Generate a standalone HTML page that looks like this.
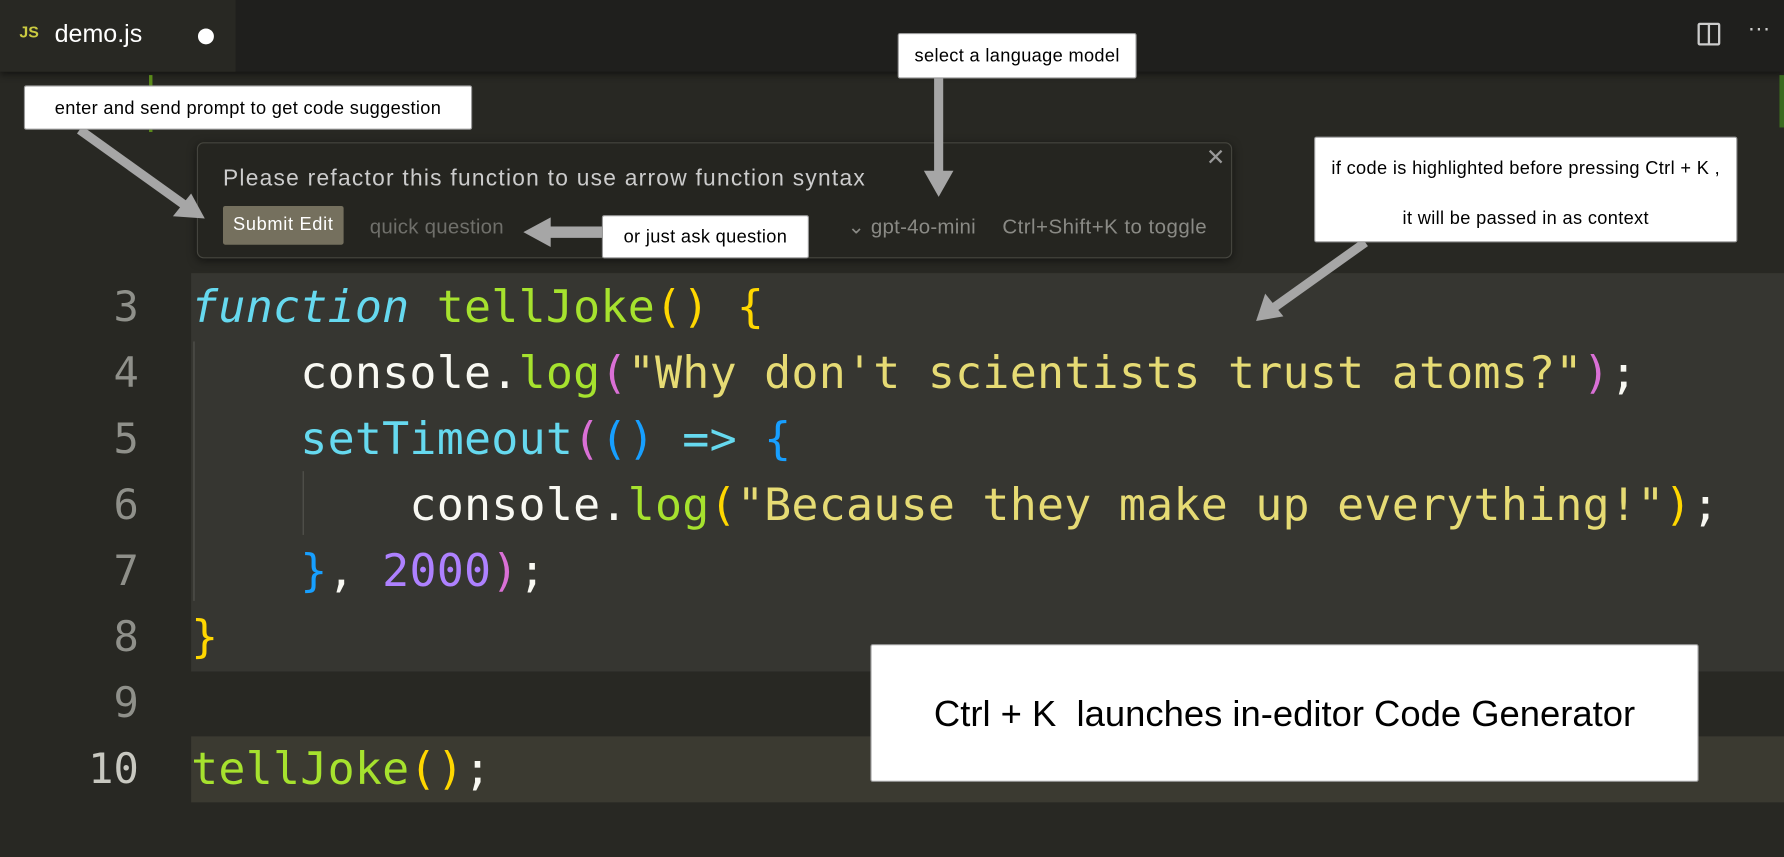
<!DOCTYPE html>
<html><head><meta charset="utf-8"><style>
html,body{margin:0;padding:0;background:#272722;overflow:hidden;width:1784px;height:857px}
#w{position:absolute;left:0;top:0;width:1568px;height:753px;transform:scale(1.13776,1.13811);transform-origin:0 0;background:#282823;font-family:"Liberation Sans",sans-serif}
.abs{position:absolute}
.tabbar{left:0;top:0;width:1568px;height:63px;background:#1f1f1d;box-shadow:0 3px 6px rgba(0,0,0,.5)}
.tab{left:0;top:0;width:207px;height:63px;background:#282823}
.code{font-family:"DejaVu Sans Mono","Liberation Mono",monospace;font-size:39.5px;letter-spacing:0.2px;white-space:pre;line-height:58px;color:#f8f8f2}
.ln{font-family:"DejaVu Sans Mono",monospace;font-size:37px;color:#8f908a;width:122px;text-align:right;left:0}
.box{background:#fff;border:1px solid #9a9a9a;border-radius:2px;color:#000;font-size:16px;letter-spacing:0.3px;text-align:center;box-sizing:border-box;white-space:nowrap}
.k{color:#66d9ef;font-style:italic}.g{color:#a6e22e}.y{color:#ffd700}.m{color:#da70d6}.s{color:#e6db74}.b{color:#179fff}.c{color:#66d9ef}.p{color:#ae81ff}
</style></head><body><div id="w">
<div class="abs tabbar"></div>
<div class="abs tab"></div>
<div class="abs" style="left:17px;top:20px;color:#cbcb41;font-weight:bold;font-size:14px">JS</div>
<div class="abs" style="left:48px;top:17px;color:#fff;font-size:22px">demo.js</div>
<div class="abs" style="left:174px;top:25px;width:14px;height:14px;border-radius:50%;background:#fff"></div>
<div class="abs" style="left:1492px;top:20px;width:20px;height:20px;border:2px solid #ccc;border-radius:2px;box-sizing:border-box"></div>
<div class="abs" style="left:1501px;top:21px;width:2px;height:18px;background:#ccc"></div>
<div class="abs" style="left:1536px;top:14px;color:#ccc;font-size:20px">···</div>
<div class="abs" style="left:1564px;top:66px;width:4px;height:46px;background:#3a6b20"></div>
<div class="abs" style="left:131px;top:66px;width:3px;height:50px;background:#5a8a1a"></div>
<div class="abs" style="left:168px;top:240px;width:1400px;height:350px;background:#363631"></div>
<div class="abs" style="left:168px;top:647px;width:1400px;height:58px;background:#3b3a31"></div>
<div class="abs" style="left:170px;top:300px;width:1px;height:228px;background:#55554f"></div>
<div class="abs" style="left:266px;top:414px;width:1px;height:56px;background:#55554f"></div>
<div class="abs ln" style="top:241px;line-height:58px">3<br>4<br>5<br>6<br>7<br>8<br>9<br><span style="color:#c8c8c0">10</span></div>
<div class="abs code" style="left:168px;top:241px"><span class="k">function</span> <span class="g">tellJoke</span><span class="y">()</span> <span class="y">{</span>
    console.<span class="g">log</span><span class="m">(</span><span class="s">"Why don't scientists trust atoms?"</span><span class="m">)</span>;
    <span class="c">setTimeout</span><span class="m">(</span><span class="b">()</span> <span class="c">=&gt;</span> <span class="b">{</span>
        console.<span class="g">log</span><span class="y">(</span><span class="s">"Because they make up everything!"</span><span class="y">)</span>;
    <span class="b">}</span>, <span class="p">2000</span><span class="m">)</span>;
<span class="y">}</span>

<span class="g">tellJoke</span><span class="y">()</span>;</div>
<div class="abs" style="left:173px;top:125px;width:910px;height:102px;background:#252520;border:1px solid #46463f;border-radius:6px;box-sizing:border-box;box-shadow:0 2px 8px rgba(0,0,0,.5)"></div>
<div class="abs" style="left:196px;top:146px;color:#ccc;font-size:20px;letter-spacing:1.1px;white-space:nowrap">Please refactor this function to use arrow function syntax</div>
<div class="abs" style="left:196px;top:181px;width:106px;height:34px;background:#75705e;border-radius:2px;color:#fff;font-size:16px;letter-spacing:0.6px;line-height:34px;text-align:center">Submit Edit</div>
<div class="abs" style="left:325px;top:189px;color:#6f6f6a;font-size:18px;letter-spacing:0.2px">quick question</div>
<div class="abs" style="left:745px;top:189px;color:#8a8a85;font-size:18px;letter-spacing:0.2px">⌄ gpt-4o-mini</div>
<div class="abs" style="left:881px;top:189px;color:#8a8a85;font-size:18px;letter-spacing:0.4px">Ctrl+Shift+K to toggle</div>
<div class="abs" style="left:1060px;top:126px;color:#999;font-size:20px">✕</div>
<svg class="abs" style="left:0;top:0" width="1568" height="753">
<g fill="#a6a6a6">
<line x1="70" y1="114" x2="162" y2="180" stroke="#a6a6a6" stroke-width="8"/>
<polygon points="180,192 152,190 168,170"/>
<rect x="821" y="69" width="8" height="85"/>
<polygon points="812,150 838,150 825,173"/>
<rect x="480" y="199" width="50" height="10"/>
<polygon points="460,204 484,191 484,217"/>
<line x1="1200" y1="213" x2="1120" y2="270" stroke="#a6a6a6" stroke-width="8"/>
<polygon points="1104,282 1112,258 1128,278"/>
</g></svg>
<div class="abs box" style="left:21px;top:75px;width:394px;height:39px;line-height:39px">enter and send prompt to get code suggestion</div>
<div class="abs box" style="left:789px;top:29px;width:210px;height:40px;line-height:40px">select a language model</div>
<div class="abs box" style="left:529px;top:189px;width:182px;height:38px;line-height:38px">or just ask question</div>
<div class="abs box" style="left:1155px;top:120px;width:372px;height:93px;padding-top:17px;line-height:22px">if code is highlighted before pressing Ctrl + K ,<br><span style="display:inline-block;margin-top:22px">it will be passed in as context</span></div>
<div class="abs box" style="left:765px;top:566px;width:728px;height:121px;line-height:121px;font-size:32px;letter-spacing:0">Ctrl + K&nbsp; launches in-editor Code Generator</div>
</div></body></html>
